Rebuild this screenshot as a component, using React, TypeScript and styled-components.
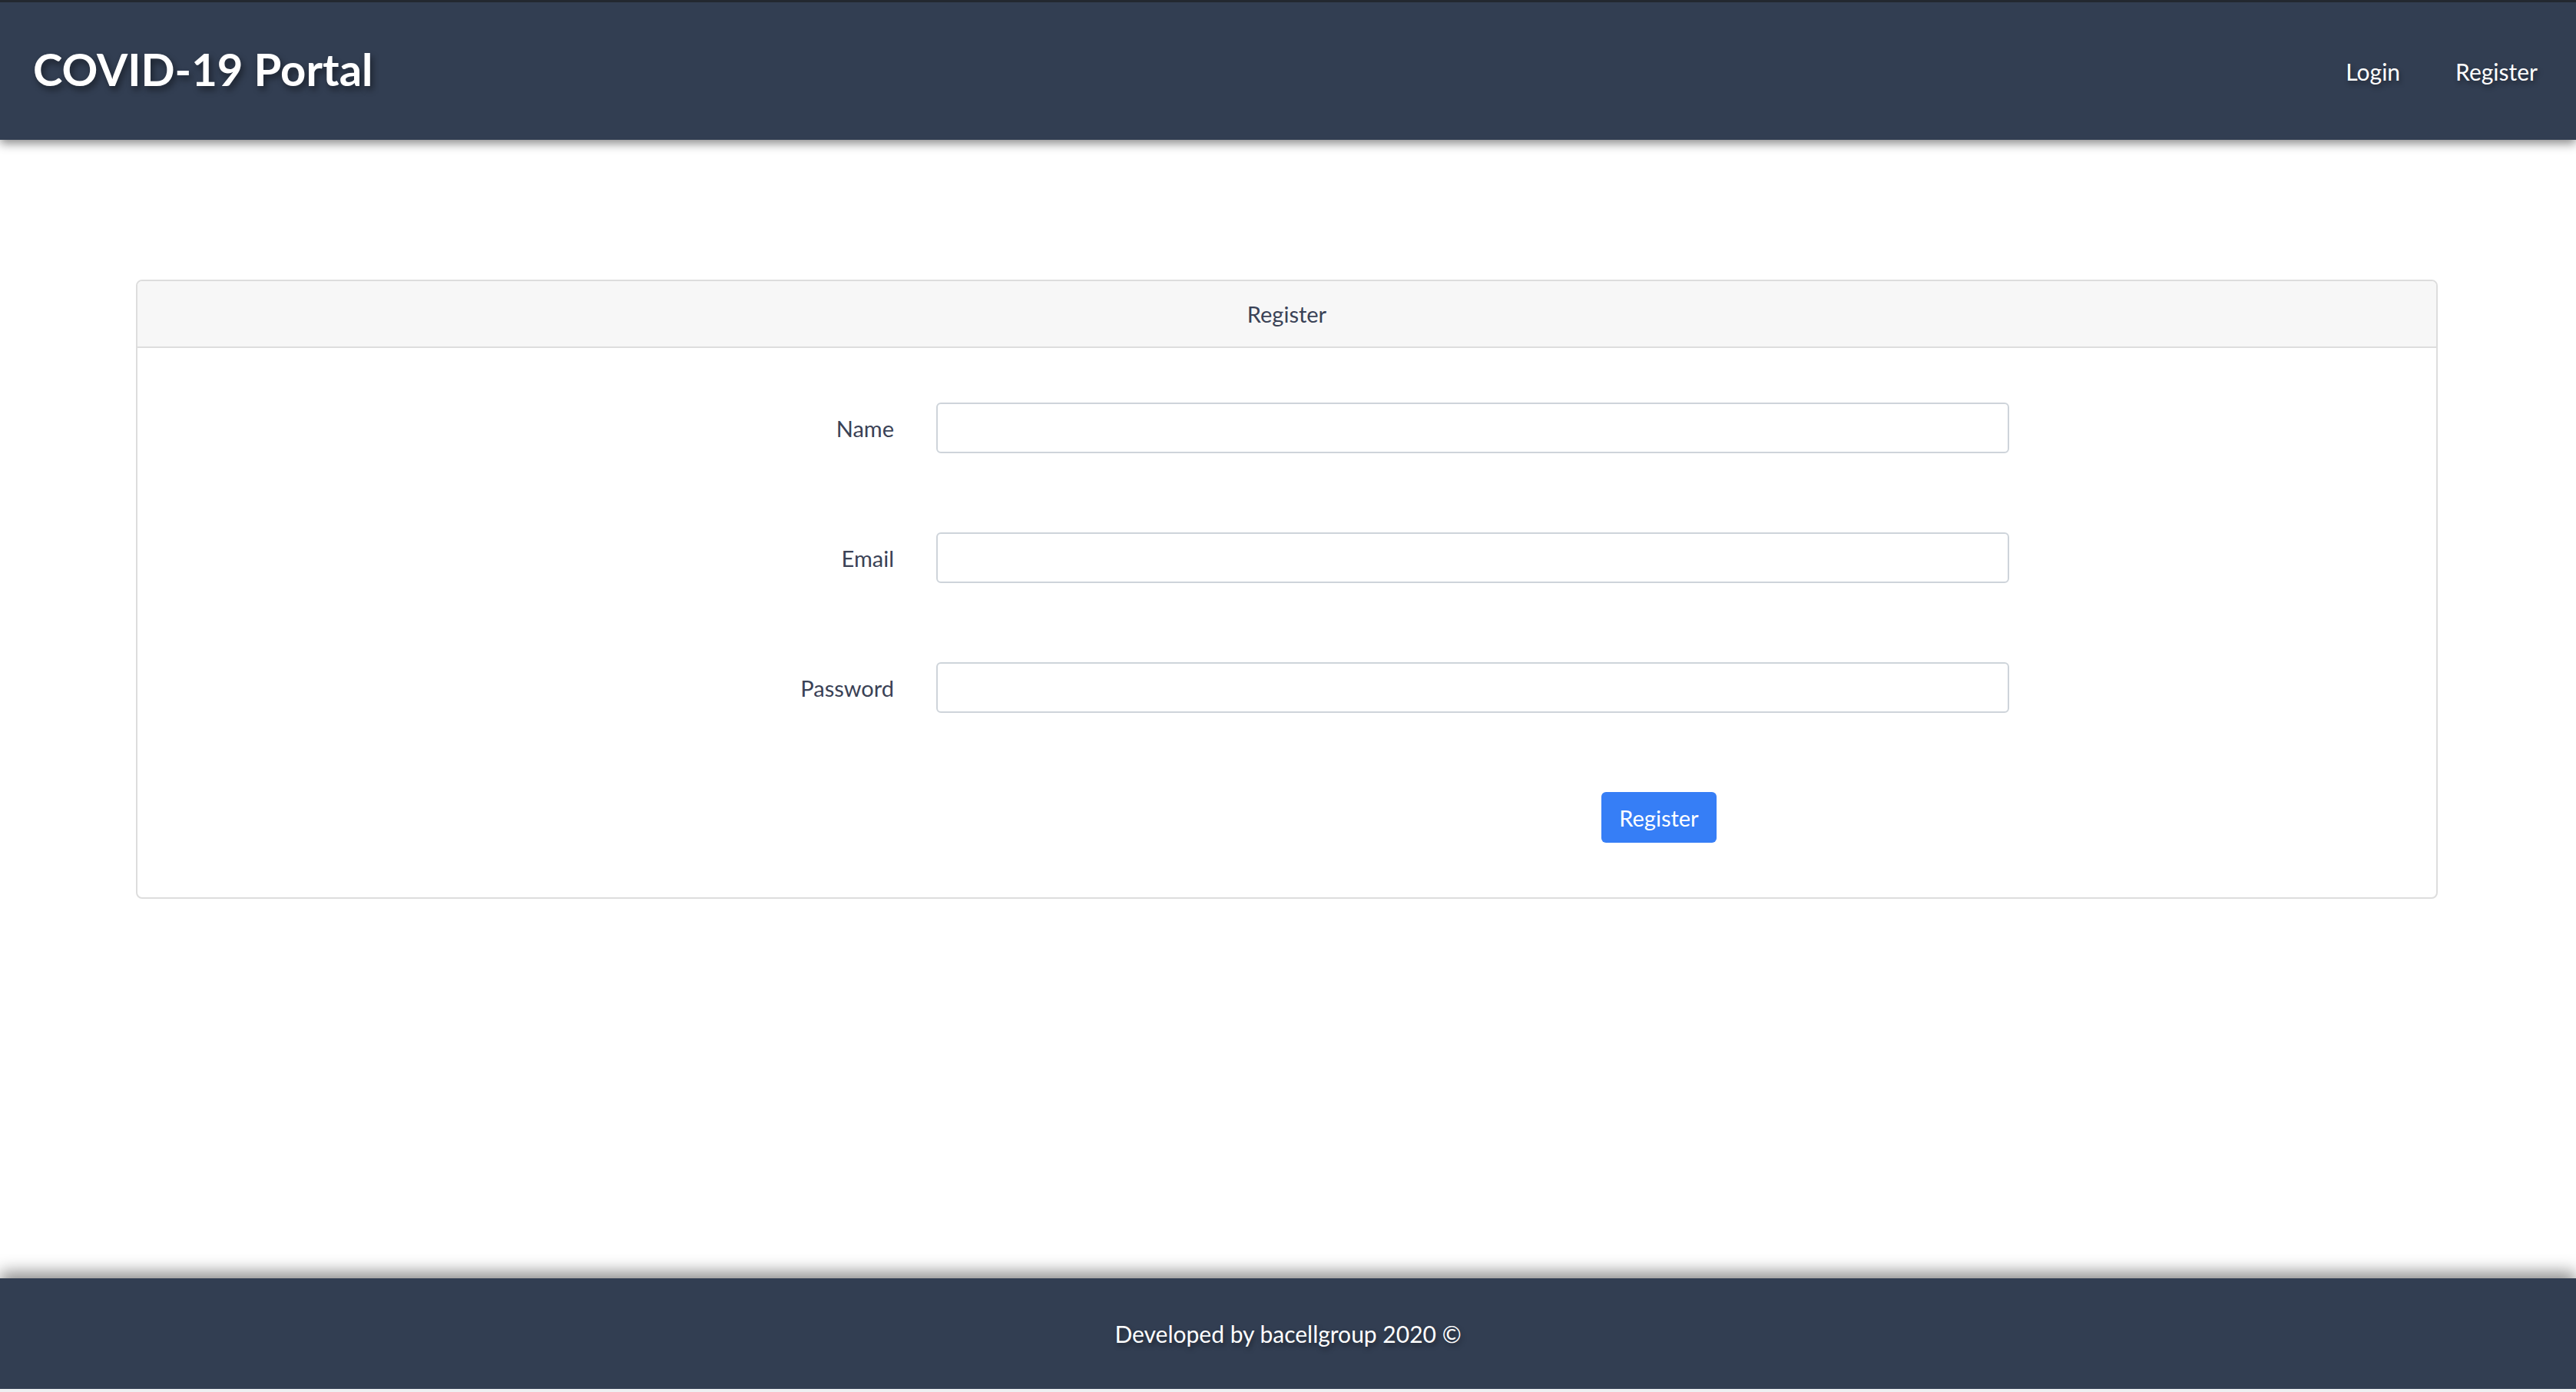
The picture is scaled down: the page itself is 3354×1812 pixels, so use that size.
import React from "react";
import styled, { createGlobalStyle } from "styled-components";

const GlobalStyle = createGlobalStyle`
  * { box-sizing: border-box; }
  html, body { margin: 0; padding: 0; }
  body {
    font-family: Lato, "Noto Sans", "Liberation Sans", sans-serif;
    background: #ffffff;
    color: #3a4256;
  }
`;

const fields = [
  { label: "Name", type: "text" },
  { label: "Email", type: "email" },
  { label: "Password", type: "password" },
];

const App = () => {
  return (
    <Page>
      <GlobalStyle />
      <Header>
        <Brand>COVID-19 Portal</Brand>
        <Nav>
          <NavLink href="#">Login</NavLink>
          <NavLink href="#">Register</NavLink>
        </Nav>
      </Header>
      <Main>
        <Card>
          <CardHeader>Register</CardHeader>
          <CardBody>
            {fields.map((f) => (
              <Row key={f.label}>
                <Label>{f.label}</Label>
                <Input type={f.type} />
              </Row>
            ))}
            <Row>
              <span />
              <Button>Register</Button>
            </Row>
          </CardBody>
        </Card>
      </Main>
      <Footer>Developed by bacellgroup 2020 ©</Footer>
    </Page>
  );
};

export default App;

const Page = styled.div`
  display: flex;
  flex-direction: column;
  min-height: 1812px;
`;

const Header = styled.header`
  height: 182px;
  background-color: #323e52;
  border-top: 3px solid #232830;
  display: flex;
  align-items: center;
  justify-content: space-between;
  padding: 0 50px 0 43px;
  box-shadow: 0 5px 12px rgba(0, 0, 0, 0.45);
  position: relative;
  z-index: 1;
`;

const Brand = styled.h1`
  margin: 0 0 6px 0;
  color: #ffffff;
  font-size: 58px;
  font-weight: 700;
  text-shadow: 3px 5px 8px rgba(0, 0, 0, 0.45);
`;

const Nav = styled.nav`
  display: flex;
  gap: 72px;
`;

const NavLink = styled.a`
  color: #ffffff;
  font-size: 30px;
  text-decoration: none;
  text-shadow: 2px 4px 6px rgba(0, 0, 0, 0.35);
`;

const Main = styled.main`
  flex: 1;
  padding: 182px 180px 0 177px;
`;

const Card = styled.div`
  border: 2px solid #dddddd;
  border-radius: 8px;
  overflow: hidden;
  background: #ffffff;
`;

const CardHeader = styled.div`
  height: 87px;
  background-color: #f7f7f7;
  border-bottom: 2px solid #dddddd;
  display: flex;
  align-items: center;
  justify-content: center;
  font-size: 29px;
  color: #3a4256;
`;

const CardBody = styled.div`
  display: flex;
  flex-direction: column;
  gap: 103px;
  padding: 71px 0 71px 0;
`;

const Row = styled.div`
  display: grid;
  grid-template-columns: 985px 1397px;
  column-gap: 55px;
  align-items: center;
`;

const Label = styled.label`
  text-align: right;
  font-size: 29px;
  color: #3a4256;
`;

const Input = styled.input`
  height: 66px;
  width: 100%;
  border: 2px solid #ced4da;
  border-radius: 6px;
  font-size: 29px;
  padding: 0 20px;
  outline: none;
`;

const Button = styled.button`
  justify-self: start;
  margin-left: 866px;
  width: 150px;
  height: 66px;
  border: none;
  border-radius: 6px;
  background-color: #367ef6;
  color: #ffffff;
  font-family: inherit;
  font-size: 29px;
  cursor: pointer;
`;

const Footer = styled.footer`
  height: 148px;
  background-color: #323e52;
  border-bottom: 4px solid #eef0f2;
  display: flex;
  align-items: center;
  justify-content: center;
  color: #ffffff;
  font-size: 30px;
  text-shadow: 2px 4px 6px rgba(0, 0, 0, 0.35);
  box-shadow: 0 -8px 20px rgba(0, 0, 0, 0.45);
`;
